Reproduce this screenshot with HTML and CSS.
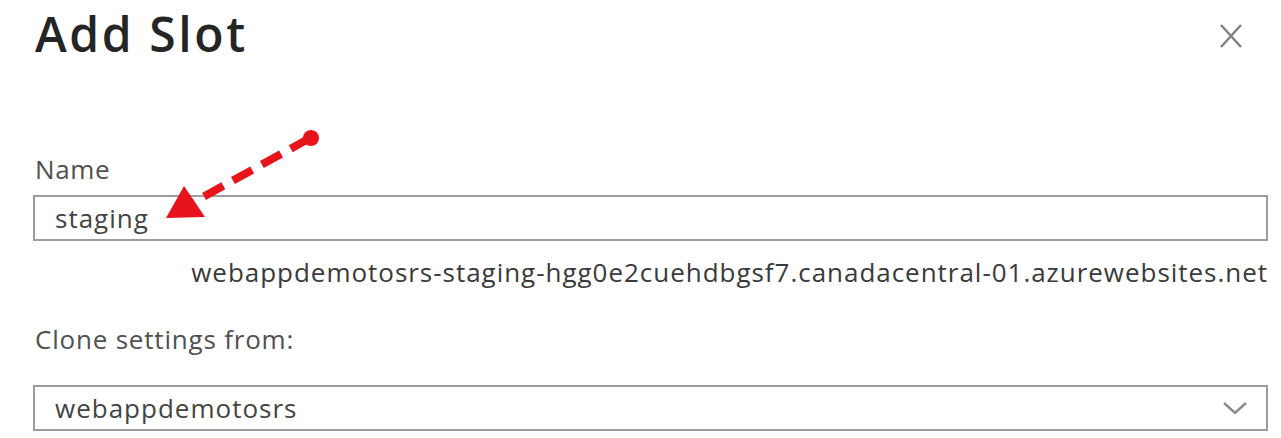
FILE: index.html
```html
<!DOCTYPE html>
<html lang="en">
<head>
    <meta charset="UTF-8">
    <title>Add Slot</title>
    <link rel="stylesheet" href="styles.css">
</head>
<body>
    <div class="panel">
        <div class="header">
            <h1>Add Slot</h1>
            <button class="close" aria-label="Close">
                <svg width="24" height="26" viewBox="0 0 24 26"><path d="M2 2 L22 24 M22 2 L2 24" stroke="#808080" stroke-width="2.4" fill="none"/></svg>
            </button>
        </div>
        <div class="form-group name-group">
            <label for="slot-name">Name</label>
            <div class="input" id="slot-name">staging</div>
            <div class="hint">webappdemotosrs-staging-hgg0e2cuehdbgsf7.canadacentral-01.azurewebsites.net</div>
        </div>
        <div class="form-group clone-group">
            <label>Clone settings from:</label>
            <div class="select">
                <span>webappdemotosrs</span>
                <svg width="26" height="16" viewBox="0 0 26 16"><path d="M2 3 L13 13 L24 3" stroke="#8a8a8a" stroke-width="2.4" fill="none"/></svg>
            </div>
        </div>
        <!-- red callout arrow -->
        <svg class="callout" width="340" height="240" viewBox="0 0 340 240">
            <line x1="310" y1="138" x2="194" y2="202" stroke="#e8141b" stroke-width="8" stroke-dasharray="22 11"/>
            <circle cx="311" cy="138" r="8" fill="#e8141b"/>
            <polygon points="166,218 184,186 205,217" fill="#e8141b"/>
        </svg>
    </div>
</body>
</html>
```
FILE: styles.css
```css
body { margin: 0; background: #fff; font-family: "Open Sans", "Noto Sans", sans-serif; color: #323130; }
.panel { position: relative; padding: 0 13px 0 33px; height: 438px; box-sizing: border-box; }
.header { display: flex; justify-content: space-between; align-items: flex-start; padding-top: 5px; }
.header h1 { margin: 0 0 0 2px; font-size: 48px; font-weight: 600; color: #252525; line-height: 58px; letter-spacing: 2.6px; }
.close { background: none; border: 0; padding: 0; margin: 18px 25px 0 0; cursor: pointer; }
.form-group label { display: block; font-size: 26px; color: #505050; line-height: 30px; letter-spacing: 0.6px; padding-left: 2px; }
.name-group { margin-top: 91px; }
.name-group label { margin-bottom: 11px; }
.input, .select {
    border: 2px solid #9c9c9c;
    height: 46px;
    box-sizing: border-box;
    display: flex;
    align-items: center;
    padding: 0 18px 0 20px;
    font-size: 26px;
    color: #444;
    letter-spacing: 1px;
}
.select { justify-content: space-between; }
.hint { text-align: right; font-size: 26px; color: #3a3a3a; margin-top: 16px; line-height: 30px; letter-spacing: 0.97px; }
.clone-group { margin-top: 37px; }
.clone-group label { margin-bottom: 31px; letter-spacing: 0.8px; }
.callout { position: absolute; left: 0; top: 0; pointer-events: none; }
```
